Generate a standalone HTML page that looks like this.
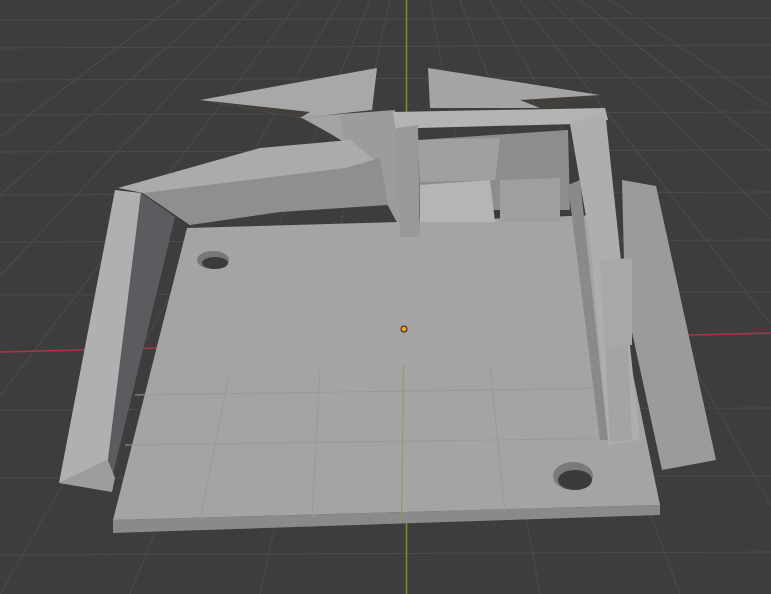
<!DOCTYPE html>
<html><head><meta charset="utf-8"><style>html,body{margin:0;padding:0;background:#3d3d3d;overflow:hidden}svg{display:block}</style></head>
<body>
<svg width="771" height="594" viewBox="0 0 771 594" xmlns="http://www.w3.org/2000/svg">
<rect width="771" height="594" fill="#3d3d3d"/>
<g stroke="#4b4b4b" stroke-width="1" fill="none">
<line x1="0" y1="20" x2="771" y2="18"/><line x1="0" y1="48" x2="771" y2="45"/><line x1="0" y1="80" x2="771" y2="77"/>
<line x1="0" y1="115" x2="771" y2="112"/><line x1="0" y1="152" x2="771" y2="150"/><line x1="0" y1="195" x2="771" y2="192"/>
<line x1="0" y1="242" x2="771" y2="240"/><line x1="0" y1="295" x2="771" y2="292"/><line x1="0" y1="410" x2="771" y2="408"/>
<line x1="0" y1="478" x2="771" y2="476"/><line x1="0" y1="555" x2="771" y2="552"/>
<line x1="-300" y1="594" x2="260" y2="0"/><line x1="-150" y1="594" x2="300" y2="0"/><line x1="0" y1="594" x2="340" y2="0"/>
<line x1="-450" y1="594" x2="220" y2="0"/><line x1="-600" y1="594" x2="180" y2="0"/><line x1="130" y1="594" x2="370" y2="0"/>
<line x1="260" y1="594" x2="390" y2="0"/><line x1="540" y1="594" x2="430" y2="0"/><line x1="680" y1="594" x2="460" y2="0"/>
<line x1="820" y1="594" x2="490" y2="0"/><line x1="980" y1="594" x2="520" y2="0"/><line x1="1150" y1="594" x2="550" y2="0"/>
<line x1="1330" y1="594" x2="580" y2="0"/><line x1="1500" y1="594" x2="610" y2="0"/>
</g>
<line x1="0" y1="352" x2="771" y2="333" stroke="#b0324a" stroke-width="1.5"/>
<line x1="406.5" y1="0" x2="406.5" y2="594" stroke="#6e9a23" stroke-width="1.5"/>
<!-- top spikes -->
<polygon points="200,100 377,68 372,110 300,118" fill="#a8a8a8"/>
<polygon points="200,100 300,118 310,112" fill="#433f3b"/>
<polygon points="428,68 600,95 545,108 430,108" fill="#a4a4a4"/>
<polygon points="520,100 600,95 545,110" fill="#433f3b"/>
<!-- center wedge -->
<polygon points="300,117 395,110 402,232 385,200 360,150" fill="#9c9c9c"/>
<polygon points="305,118 340,115 345,140 360,152" fill="#a3a3a3"/>
<!-- top-left wing -->
<polygon points="118,188 260,148 350,140 375,160 345,180 190,225 143,193" fill="#ababab"/>
<polygon points="143,193 345,168 380,158 388,205 280,212 190,225" fill="#8f8f8f"/>
<!-- right outer wing -->
<polygon points="622,180 656,186 716,460 662,470 625,300" fill="#9a9b9d"/>
<!-- plate -->
<polygon points="187,228 400,222 600,215 660,505 113,520" fill="#a4a4a4"/>
<polygon points="113,520 660,505 660,515 113,533" fill="#8a8a8a"/>
<g stroke="#9a9a9a" stroke-width="1">
<line x1="230" y1="370" x2="200" y2="520"/><line x1="320" y1="368" x2="312" y2="518"/><line x1="490" y1="365" x2="505" y2="512"/>
<line x1="135" y1="395" x2="620" y2="388"/><line x1="125" y1="445" x2="640" y2="438"/>
</g>
<line x1="403.5" y1="365" x2="401.5" y2="520" stroke="#8a9a6a" stroke-width="1"/>
<!-- left wall -->
<polygon points="115,190 141,193 108,460 59,483" fill="#b0b0b0"/>
<polygon points="141,193 175,217 112,478 108,460" fill="#5b5b60"/>
<polygon points="59,483 108,460 115,478 112,492" fill="#9d9d9d"/>
<!-- frame -->
<polygon points="418,140 568,130 570,210 420,210" fill="#8d8d8d"/>
<polygon points="418,140 500,138 495,180 420,182" fill="#a0a0a0"/>
<polygon points="420,185 490,180 495,222 420,222" fill="#b5b5b5"/>
<polygon points="500,180 560,178 560,222 500,222" fill="#9f9f9f"/>
<polygon points="393,112 605,108 608,120 575,124 418,128 396,132" fill="#b4b4b4"/>
<polygon points="396,128 418,125 420,237 400,237" fill="#999"/>
<polygon points="570,124 605,110 640,440 608,445 590,240" fill="#aeaeae"/>
<polygon points="568,185 580,180 608,440 600,440" fill="#8a8a8a"/>
<polygon points="600,260 632,258 632,345 605,347" fill="#a8a8a8"/>
<polygon points="605,347 628,345 632,440 610,442" fill="#a4a4a4"/>
<!-- holes -->
<ellipse cx="213" cy="260" rx="16" ry="9" fill="#777"/>
<ellipse cx="215" cy="263" rx="13" ry="6" fill="#3b3b3b"/>
<ellipse cx="573" cy="476" rx="20" ry="14" fill="#7a7a7a"/>
<ellipse cx="575" cy="480" rx="17" ry="10" fill="#3b3b3b"/>
<circle cx="404" cy="329" r="3" fill="#f5a00e" stroke="#222" stroke-width="1"/>
</svg>
</body></html>
